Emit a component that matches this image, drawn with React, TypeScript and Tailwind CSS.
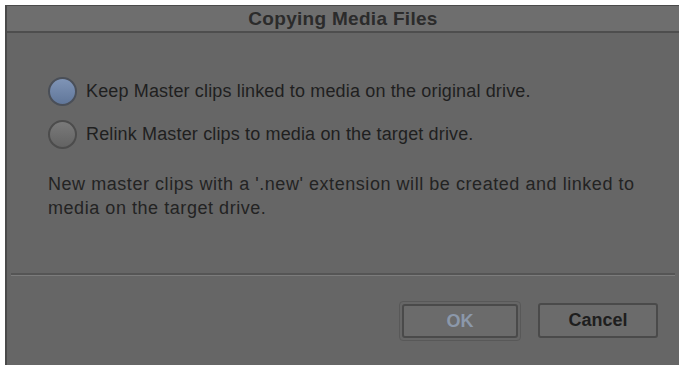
import React from "react";

export default function App() {
  return (
    <div className="w-[679px] h-[370px] bg-white pt-[5px] pl-[5px] pb-[5px]" style={{ fontFamily: '"Liberation Sans", Arial, sans-serif' }}>
      <div className="h-full flex flex-col bg-[#666666] border-l-2 border-t border-[#4a4a4a]">
        <div className="h-[27px] bg-[#6e6e6e] border-b-2 border-[#4e4e4e] flex items-center justify-center">
          <span className="text-[19px] font-bold text-[#2b2b2b] leading-none tracking-[0.3px]">Copying Media Files</span>
        </div>
        <div className="flex flex-col pl-[41px] pt-[43px]">
          <div className="flex items-center gap-[9px] h-[30px]">
            <span className="w-[29px] h-[29px] rounded-full border-2 border-[#4a4f58] bg-gradient-to-b from-[#7f94b6] to-[#61779a]" />
            <span className="text-[18px] text-[#1f1f1f] tracking-[0.15px]">Keep Master clips linked to media on the original drive.</span>
          </div>
          <div className="flex items-center gap-[9px] h-[30px] mt-[13px]">
            <span className="w-[29px] h-[29px] rounded-full border-2 border-[#4c4c4c] bg-gradient-to-b from-[#7a7a7a] to-[#636363]" />
            <span className="text-[18px] text-[#1f1f1f] tracking-[0.15px]">Relink Master clips to media on the target drive.</span>
          </div>
          <p className="text-[18px] leading-[24px] text-[#232323] mt-[23px] w-[610px] tracking-[0.55px]">
            New master clips with a '.new' extension will be created and linked to media on the target drive.
          </p>
        </div>
        <div className="mt-auto mx-[4px] border-t-2 border-[#555555] border-b border-b-[#7c7c7c]" />
        <div className="flex justify-end gap-[17px] pr-[21px] pt-[25px] pb-[24px]">
          <div className="p-[2px] rounded-[4px] border border-[#585858]">
            <button className="w-[116px] h-[34px] rounded-[3px] border-2 border-[#4a4a4a] bg-[#6b6b6b] text-[18px] font-bold text-[#8b98aa]">OK</button>
          </div>
          <div className="pt-[2px]">
            <button className="w-[120px] h-[35px] rounded-[3px] border-2 border-[#4a4a4a] bg-[#6b6b6b] text-[18px] font-bold text-[#1e1e1e]">Cancel</button>
          </div>
        </div>
      </div>
    </div>
  );
}
